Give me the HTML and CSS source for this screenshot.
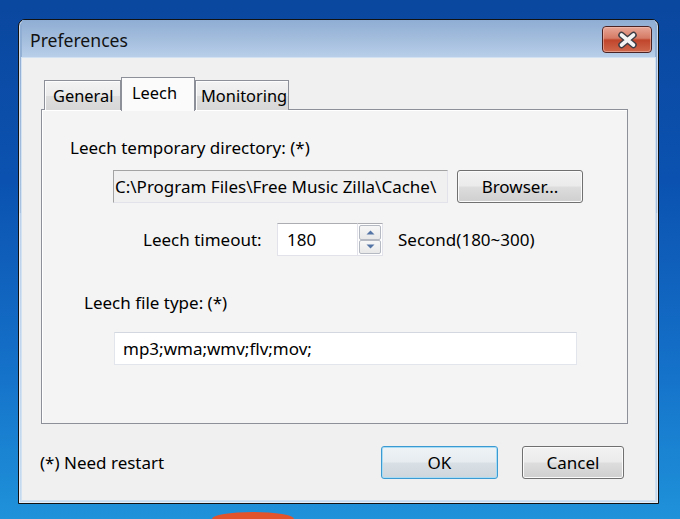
FILE: index.html
```html
<!DOCTYPE html>
<html>
<head>
<meta charset="utf-8">
<title>Preferences</title>
<link rel="stylesheet" href="styles.css">
</head>
<body>
<div class="orb"></div>
<div class="window">
  <div class="titlebar">
    <span class="title">Preferences</span>
    <div class="close">
      <svg width="50" height="27" viewBox="0 0 50 27">
        <defs>
          <linearGradient id="cg" x1="0" y1="0" x2="0" y2="1">
            <stop offset="0" stop-color="#e9a898"/>
            <stop offset="0.45" stop-color="#d57a66"/>
            <stop offset="0.52" stop-color="#c0452b"/>
            <stop offset="1" stop-color="#d06a4e"/>
          </linearGradient>
        </defs>
        <rect x="0.5" y="0.5" width="49" height="26" rx="3.5" fill="url(#cg)" stroke="#4a2424"/>
        <rect x="1.5" y="1.5" width="47" height="24" rx="2.5" fill="none" stroke="#f2c4b8" stroke-opacity="0.55"/>
        <path d="M19.5 9 L31.5 19 M31.5 9 L19.5 19" stroke="#3d3d45" stroke-width="6.5" stroke-linecap="round"/>
        <path d="M19.5 9 L31.5 19 M31.5 9 L19.5 19" stroke="#f4f4f4" stroke-width="3.6" stroke-linecap="round"/>
      </svg>
    </div>
  </div>
  <div class="client">
    <div class="tabs">
      <div class="tab tab-general">General</div>
      <div class="tab tab-leech active">Leech</div>
      <div class="tab tab-monitor">Monitoring</div>
    </div>
    <div class="panel">
      <div class="label label-dir">Leech temporary directory: (*)</div>
      <div class="row row-dir">
        <div class="field field-dir">C:\Program Files\Free Music Zilla\Cache\</div>
        <div class="btn btn-browse">Browser...</div>
      </div>
      <div class="row row-timeout">
        <span class="label-timeout">Leech timeout:</span>
        <div class="spinbox">
          <div class="field field-timeout">180</div>
          <div class="spin">
            <div class="spin-btn spin-up">
              <svg width="9" height="5" viewBox="0 0 9 5"><path d="M0.5 4.5 L4.5 0.5 L8.5 4.5 Z" fill="#5574a6"/></svg>
            </div>
            <div class="spin-btn spin-down">
              <svg width="9" height="5" viewBox="0 0 9 5"><path d="M0.5 0.5 L4.5 4.5 L8.5 0.5 Z" fill="#5574a6"/></svg>
            </div>
          </div>
        </div>
        <span class="label-second">Second(180~300)</span>
      </div>
      <div class="label label-type">Leech file type: (*)</div>
      <div class="field field-type">mp3;wma;wmv;flv;mov;</div>
    </div>
    <div class="footer">
      <span class="note">(*) Need restart</span>
      <div class="buttons">
        <div class="btn btn-ok">OK</div>
        <div class="btn btn-cancel">Cancel</div>
      </div>
    </div>
  </div>
</div>
</body>
</html>
```
FILE: styles.css
```css
* { box-sizing: border-box; }
html, body { margin: 0; padding: 0; overflow: hidden; }
body {
  width: 680px;
  height: 519px;
  position: relative;
  font-family: "Noto Sans", "DejaVu Sans", sans-serif;
  font-size: 17px;
  color: #000;
  background: linear-gradient(180deg, #0a479f 0%, #0b52b0 35%, #1470c8 70%, #1f92da 100%);
}
.orb {
  position: absolute;
  left: 212px;
  top: 512px;
  width: 82px;
  height: 7px;
  border-radius: 50% 50% 0 0 / 100% 100% 0 0;
  background: #e2552c;
}
.window {
  position: relative;
  margin: 19px 0 0 18px;
  width: 641px;
  height: 485px;
  border: 1px solid #121212;
  border-radius: 7px 7px 0 0;
  padding: 0 3px 3px 3px;
  display: flex;
  flex-direction: column;
  background: linear-gradient(180deg, #8eacd2 0%, #a9c2e0 40%, #bdd2ea 8%, #c6daef 100%);
  box-shadow: inset 0 0 0 1px rgba(255,255,255,0.55);
}
.titlebar {
  height: 38px;
  display: flex;
  justify-content: space-between;
  align-items: flex-start;
  padding-left: 8px;
  background: linear-gradient(180deg, #8fadd3 0%, #a3bddd 50%, #bad0ea 100%);
}
.title {
  font-size: 17.6px;
  line-height: 40px;
  color: #121212;
}
.close {
  margin-top: 6px;
  margin-right: 3px;
  width: 50px;
  height: 27px;
}
.close svg { display: block; }
.client {
  flex: 1;
  background: #f0f0f0;
  box-shadow: 0 0 0 1px #d2e2f2;
  display: flex;
  flex-direction: column;
  padding-top: 19px;
}
.tabs {
  display: flex;
  align-items: flex-end;
  height: 33px;
  margin-left: 22px;
  position: relative;
  z-index: 1;
  font-size: 16.4px;
}
.tab {
  height: 30px;
  border: 1px solid #8d9099;
  border-bottom: none;
  background: linear-gradient(180deg, #f3f3f3 0%, #ebebeb 50%, #dedede 50%, #d7d7d7 100%);
  padding-left: 8px;
  line-height: 30px;
  box-shadow: inset 1px 1px 0 #fdfdfd;
  white-space: nowrap;
}
.tab-general { width: 77px; }
.tab-leech { width: 74px; }
.tab-monitor { width: 94px; padding-left: 5px; }
.tab.active {
  height: 34px;
  background: #fbfbfb;
  padding-left: 10px;
  line-height: 30px;
  box-shadow: none;
  margin-bottom: -1px;
}
.panel {
  margin-left: 19px;
  margin-top: -1px;
  width: 587px;
  height: 315px;
  border: 1px solid #8d9099;
  box-shadow: inset 1px 1px 0 #ffffff;
  background: #f4f4f4;
  display: flex;
  flex-direction: column;
  align-items: flex-start;
  padding-top: 27px;
}
.label { line-height: 22px; }
.label-dir { margin-left: 28px; }
.row { display: flex; align-items: center; }
.row-dir { margin-top: 11px; margin-left: 71px; }
.field {
  height: 33px;
  line-height: 31px;
  border: 1px solid #e2e3ea;
  border-top-color: #abadb3;
  background: #fff;
  white-space: nowrap;
}
.field-dir {
  width: 335px;
  background: #f0f0f0;
  border-color: #e2e3ea;
  border-top-color: #a3a3a3;
  border-left-color: #a3a3a3;
  padding-left: 1px;
  overflow: hidden;
}
.btn {
  height: 33px;
  border: 1px solid #707070;
  border-radius: 3px;
  background: linear-gradient(180deg, #f2f2f2 0%, #ebebeb 48%, #dddddd 52%, #cfcfcf 100%);
  box-shadow: inset 0 0 0 1px #fbfbfb;
  text-align: center;
  line-height: 31px;
}
.btn-browse { width: 126px; margin-left: 9px; }
.row-timeout { margin-top: 20px; margin-left: 101px; height: 33px; }
.label-timeout { width: 134px; }
.spinbox { display: flex; }
.field-timeout {
  width: 80px;
  padding-left: 9px;
  border-right: none;
}
.spin {
  width: 26px;
  height: 33px;
  display: flex;
  flex-direction: column;
  border: 1px solid #e2e3ea;
  border-top-color: #abadb3;
  background: #fff;
  padding: 1px;
}
.spin-btn {
  flex: 1;
  display: flex;
  align-items: center;
  justify-content: center;
  border: 1px solid #b5b9c2;
  border-radius: 2px;
  background: linear-gradient(180deg, #f7f7f7 0%, #e8e8e8 100%);
}
.spin-btn svg { display: block; }
.label-second { margin-left: 15px; }
.label-type { margin-top: 36px; margin-left: 42px; }
.field-type {
  margin-top: 18px;
  margin-left: 72px;
  width: 463px;
  padding-left: 8px;
  border-color: #e2e6ec;
  border-top-color: #d3d8e0;
}
.footer {
  display: flex;
  align-items: center;
  justify-content: space-between;
  margin-top: 22px;
  padding-left: 18px;
  padding-right: 31px;
  height: 33px;
}
.buttons { display: flex; gap: 24px; }
.btn-ok {
  width: 117px;
  border-color: #3c9ad3;
  box-shadow: inset 0 0 0 1px #a8dcf4;
  background: linear-gradient(180deg, #eef3f6 0%, #e6ecf0 48%, #d9e0e5 52%, #cfd6dc 100%);
}
.btn-cancel { width: 102px; }
```
